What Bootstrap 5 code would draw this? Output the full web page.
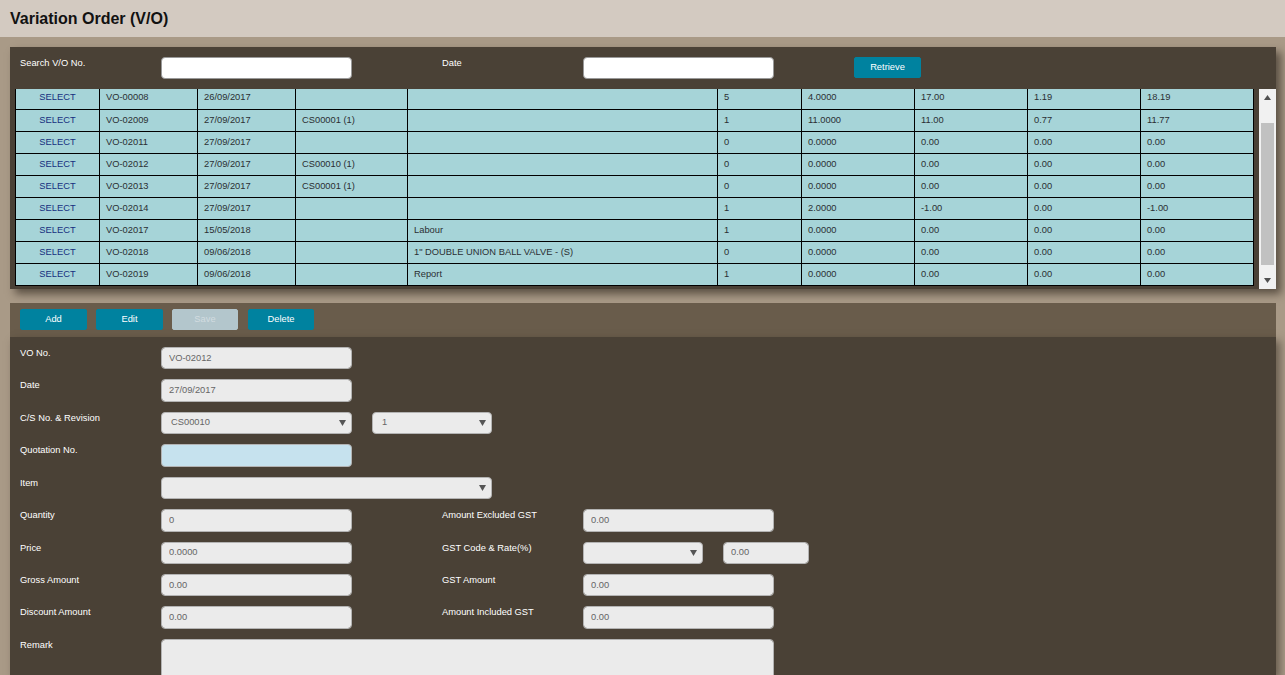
<!DOCTYPE html>
<html lang="en">
<head>
<meta charset="utf-8">
<title>Variation Order (V/O)</title>
<link rel="stylesheet" href="https://cdn.jsdelivr.net/npm/bootstrap@5.3.0/dist/css/bootstrap.min.css">
<style>
html,body{height:675px;overflow:hidden}
body{background:#a99a87;font-family:"Liberation Sans",Arial,sans-serif;font-size:9.33px;color:#333}
.page-head{height:37px;background:#d3cac1;padding:9px 10px 0}
.page-head h1{font-size:16px;font-weight:700;color:#111;margin:0;line-height:19px}
.list-panel{margin:10px 9px 0 10px;height:242px;background:#4a4136;box-shadow:5px 5px 8px rgba(40,32,24,.6)}
.search-bar{height:42px;padding:10px 0 0 10px}
.lab{width:141px;flex:none;color:#fff;font-weight:400;font-size:9.33px;line-height:11px;padding-top:1px}
.lab2{margin-left:90px}
.fld.form-control,.fld.form-select{width:191px;flex:none;height:100%;min-height:0;padding:0 7px 1px;font-size:9.33px;color:#666;background-color:#ebebeb;border:1px solid #b3b3b3;border-radius:4px;box-shadow:none;line-height:1}
.fld.form-select{padding:0 0 0 9px;background-image:url("data:image/svg+xml,%3Csvg xmlns='http://www.w3.org/2000/svg' width='7' height='6'%3E%3Cpath d='M0 0h7L3.500 6z' fill='%23555'/%3E%3C/svg%3E");background-size:7px 6px;background-position:right 5px center}
.search-bar .fld.form-control{background:#fff;height:22px;border-color:#999}
.w-wide.fld{width:331px}
.w-sm.fld{width:120px}
.w-xs.fld{width:86px}
.ms-20{margin-left:20px}
.hint-blue.fld{background:#c6e2ee}
.go-btn.btn{width:67px;height:21px;padding:0;font-size:9.33px;font-weight:400;line-height:19px;color:#fff;background:#00829f;border:1px solid #00829f;border-radius:2px}
.go-btn.btn.off{background:#b3c6cc;border-color:#b3c6cc;color:#d2dce0;opacity:1;width:66px}
.go-btn.btn.last{width:66px;margin-left:1px}
.search-bar .go-btn{margin-left:80px}
.grid-wrap{padding-left:5px;height:200px}
.vo-grid{width:1239px;table-layout:fixed;border-collapse:separate;border-spacing:0;margin:0;font-size:9.33px;flex:none;align-self:flex-start}
.vo-grid td{height:22px;padding:0 6px;border:0;border-right:1px solid #000;border-bottom:1px solid #000;vertical-align:middle;line-height:11px;white-space:nowrap;background:#a6d4d8;color:#2b2f33;box-shadow:none}
.vo-grid tr:first-child td{height:21px;padding-bottom:4px}
.vo-grid td:first-child{text-align:center;border-left:1px solid #000}
.vo-grid a{color:#16307f;text-decoration:none}
.scroll-rail{width:17px;height:200px;margin-left:5px;background:#f1f1f1;position:relative;flex:none}
.scroll-rail .thumb{position:absolute;left:2px;right:2px;top:34px;height:142px;background:#c1c1c1}
.scroll-rail svg{position:absolute;left:5px}
.tool-bar{margin:14px 9px 0 10px;height:34px;background:#695c4b;padding:6px 0 0 10px;gap:9px}
.edit-panel{margin:0 9px 0 10px;height:338px;overflow:hidden;background:#4a4136;padding:10px 0 0 10px;box-shadow:4px 4px 8px rgba(40,32,24,.5)}
.frow{height:22.43px;margin-bottom:10px}
.remark.fld.form-control{width:613px;height:70px;flex:none;resize:none}
</style>
</head>
<body>
<header class="page-head"><h1>Variation Order (V/O)</h1></header>

<section class="list-panel">
  <div class="search-bar d-flex align-items-start">
    <div class="lab">Search V/O No.</div>
    <input class="fld form-control" type="text">
    <div class="lab lab2">Date</div>
    <input class="fld form-control" type="text">
    <button class="go-btn btn" type="button">Retrieve</button>
  </div>
  <div class="grid-wrap d-flex">
    <table class="vo-grid">
      <colgroup><col style="width:85px"><col style="width:98px"><col style="width:98px"><col style="width:112px"><col style="width:310px"><col style="width:84px"><col style="width:113px"><col style="width:113px"><col style="width:113px"><col style="width:113px"></colgroup>
      <tbody>
        <tr><td><a href="#">SELECT</a></td><td>VO-00008</td><td>26/09/2017</td><td></td><td></td><td>5</td><td>4.0000</td><td>17.00</td><td>1.19</td><td>18.19</td></tr>
        <tr><td><a href="#">SELECT</a></td><td>VO-02009</td><td>27/09/2017</td><td>CS00001 (1)</td><td></td><td>1</td><td>11.0000</td><td>11.00</td><td>0.77</td><td>11.77</td></tr>
        <tr><td><a href="#">SELECT</a></td><td>VO-02011</td><td>27/09/2017</td><td></td><td></td><td>0</td><td>0.0000</td><td>0.00</td><td>0.00</td><td>0.00</td></tr>
        <tr><td><a href="#">SELECT</a></td><td>VO-02012</td><td>27/09/2017</td><td>CS00010 (1)</td><td></td><td>0</td><td>0.0000</td><td>0.00</td><td>0.00</td><td>0.00</td></tr>
        <tr><td><a href="#">SELECT</a></td><td>VO-02013</td><td>27/09/2017</td><td>CS00001 (1)</td><td></td><td>0</td><td>0.0000</td><td>0.00</td><td>0.00</td><td>0.00</td></tr>
        <tr><td><a href="#">SELECT</a></td><td>VO-02014</td><td>27/09/2017</td><td></td><td></td><td>1</td><td>2.0000</td><td>-1.00</td><td>0.00</td><td>-1.00</td></tr>
        <tr><td><a href="#">SELECT</a></td><td>VO-02017</td><td>15/05/2018</td><td></td><td>Labour</td><td>1</td><td>0.0000</td><td>0.00</td><td>0.00</td><td>0.00</td></tr>
        <tr><td><a href="#">SELECT</a></td><td>VO-02018</td><td>09/06/2018</td><td></td><td>1" DOUBLE UNION BALL VALVE - (S)</td><td>0</td><td>0.0000</td><td>0.00</td><td>0.00</td><td>0.00</td></tr>
        <tr><td><a href="#">SELECT</a></td><td>VO-02019</td><td>09/06/2018</td><td></td><td>Report</td><td>1</td><td>0.0000</td><td>0.00</td><td>0.00</td><td>0.00</td></tr>
      </tbody>
    </table>
    <div class="scroll-rail">
      <svg width="7" height="5" style="top:6px" viewBox="0 0 7 5"><path d="M3.500 0L7 5H0z" fill="#505050"/></svg>
      <div class="thumb"></div>
      <svg width="7" height="5" style="bottom:6px" viewBox="0 0 7 5"><path d="M0 0h7L3.500 5z" fill="#505050"/></svg>
    </div>
  </div>
</section>

<div class="tool-bar d-flex align-items-start">
  <button class="go-btn btn" type="button">Add</button>
  <button class="go-btn btn" type="button">Edit</button>
  <button class="go-btn btn off" type="button" disabled>Save</button>
  <button class="go-btn btn last" type="button">Delete</button>
</div>

<section class="edit-panel">
  <div class="frow d-flex"><div class="lab">VO No.</div><input class="fld form-control" value="VO-02012" readonly></div>
  <div class="frow d-flex"><div class="lab">Date</div><input class="fld form-control" value="27/09/2017" readonly></div>
  <div class="frow d-flex"><div class="lab">C/S No. &amp; Revision</div><select class="fld form-select"><option>CS00010</option></select><select class="fld form-select w-sm ms-20"><option>1</option></select></div>
  <div class="frow d-flex"><div class="lab">Quotation No.</div><input class="fld form-control hint-blue"></div>
  <div class="frow d-flex"><div class="lab">Item</div><select class="fld form-select w-wide"><option></option></select></div>
  <div class="frow d-flex"><div class="lab">Quantity</div><input class="fld form-control" value="0" readonly><div class="lab lab2">Amount Excluded GST</div><input class="fld form-control" value="0.00" readonly></div>
  <div class="frow d-flex"><div class="lab">Price</div><input class="fld form-control" value="0.0000" readonly><div class="lab lab2">GST Code &amp; Rate(%)</div><select class="fld form-select w-sm"><option></option></select><input class="fld form-control w-xs ms-20" value="0.00" readonly></div>
  <div class="frow d-flex"><div class="lab">Gross Amount</div><input class="fld form-control" value="0.00" readonly><div class="lab lab2">GST Amount</div><input class="fld form-control" value="0.00" readonly></div>
  <div class="frow d-flex"><div class="lab">Discount Amount</div><input class="fld form-control" value="0.00" readonly><div class="lab lab2">Amount Included GST</div><input class="fld form-control" value="0.00" readonly></div>
  <div class="d-flex"><div class="lab">Remark</div><textarea class="fld form-control remark" readonly></textarea></div>
</section>
</body>
</html>
